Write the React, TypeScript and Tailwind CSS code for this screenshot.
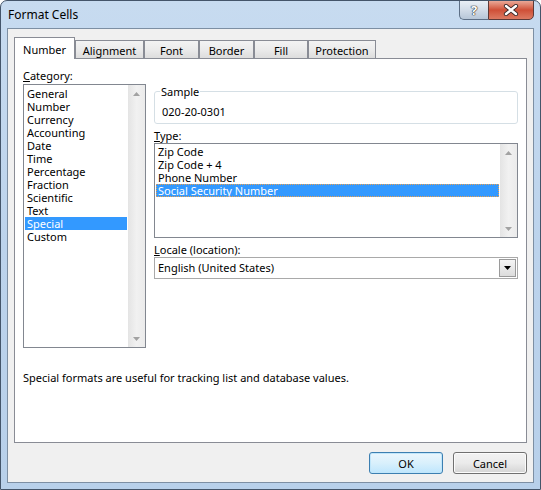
const categories = [
  "General",
  "Number",
  "Currency",
  "Accounting",
  "Date",
  "Time",
  "Percentage",
  "Fraction",
  "Scientific",
  "Text",
  "Special",
  "Custom",
];

const types = ["Zip Code", "Zip Code + 4", "Phone Number", "Social Security Number"];

const tabs = [
  { label: "Number", w: "w-[61px]" },
  { label: "Alignment", w: "w-[69px]" },
  { label: "Font", w: "w-[55px]" },
  { label: "Border", w: "w-[55px]" },
  { label: "Fill", w: "w-[54px]" },
  { label: "Protection", w: "w-[68px]" },
];

function ScrollBar() {
  return (
    <div className="w-[17px] flex flex-col justify-between bg-linear-to-r from-[#e4e4e4] via-[#f1f1f1] to-[#ebebeb]">
      <div className="h-[17px] flex items-center justify-center">
        <svg width="7" height="4" viewBox="0 0 7 4">
          <path d="M0 4 L3.5 0 L7 4 Z" fill="#a2a2a2" />
        </svg>
      </div>
      <div className="h-[17px] flex items-center justify-center">
        <svg width="7" height="4" viewBox="0 0 7 4">
          <path d="M0 0 L3.5 4 L7 0 Z" fill="#a2a2a2" />
        </svg>
      </div>
    </div>
  );
}

export default function App() {
  return (
    <div className="w-[541px] h-[490px] flex flex-col rounded-t-[7px] border border-[#44556a] bg-linear-to-b from-[#c7dbf0] via-[#bcd3ec] to-[#b8d0ea] text-[11px] text-black font-['Noto_Sans',sans-serif] overflow-hidden">
      {/* Title bar */}
      <div className="h-[27px] flex items-start pl-[7px] pr-[6px]">
        <div className="pt-[6px] leading-[16px] text-[12px] text-[#000]">Format Cells</div>
        <div className="ml-auto -mt-px flex">
          <div className="w-[29px] h-[20px] flex items-center justify-center rounded-bl-[5px] border border-r-0 border-[#5d6f86] bg-linear-to-b from-[#e9eff6] via-[#d2dce8] to-[#b7c6d8] text-white font-bold text-[13px] leading-none [text-shadow:0_0_1px_#222,0_0_1px_#222,0_0_1px_#222]">
            ?
          </div>
          <div className="w-[46px] h-[20px] flex items-center justify-center rounded-br-[5px] border border-[#5d3a38] bg-linear-to-b from-[#e9a897] via-[#cf4f37] to-[#dc7a62]">
            <svg width="16" height="12" viewBox="0 0 16 12">
              <path d="M3 2 L13 10 M13 2 L3 10" stroke="#3b2a2a" strokeWidth="4.2" strokeLinecap="round" />
              <path d="M3 2 L13 10 M13 2 L3 10" stroke="#ffffff" strokeWidth="2.4" strokeLinecap="round" />
            </svg>
          </div>
        </div>
      </div>

      {/* Client area */}
      <div className="mx-[6px] h-[455px] border border-[#7d8fa3] bg-[#f0f0f0] flex flex-col">
        {/* Tabs */}
        <div className="flex items-end pt-[8px] pl-[6px]">
          {tabs.map((t, i) =>
            i === 0 ? (
              <div
                key={t.label}
                className={`${t.w} relative z-10 -mb-px h-[22px] flex justify-center pt-[4px] leading-[15px] border border-b-0 border-[#898c95] bg-white`}
              >
                {t.label}
              </div>
            ) : (
              <div
                key={t.label}
                className={`${t.w} h-[18px] flex justify-center pt-[2px] leading-[15px] border border-b-0 border-[#898c95] bg-linear-to-b from-[#f3f3f3] via-[#ebebeb] to-[#dddddd]`}
              >
                {t.label}
              </div>
            )
          )}
        </div>

        {/* Panel */}
        <div className="mx-[6px] h-[385px] border border-[#898c95] bg-white pl-[8px] pt-[9px]">
          <div className="flex items-start">
            {/* Category */}
            <div className="w-[123px]">
              <div className="h-[15px] leading-[15px]">
                <span className="underline">C</span>ategory:
              </div>
              <div className="mt-[1px] h-[264px] border border-[#828790] flex">
                <div className="flex-1 pt-[2px] px-[1px]">
                  {categories.map((c) => (
                    <div
                      key={c}
                      className={`h-[13px] leading-[13px] pl-[2px] ${
                        c === "Special" ? "bg-[#3399ff] text-white" : ""
                      }`}
                    >
                      {c}
                    </div>
                  ))}
                </div>
                <ScrollBar />
              </div>
            </div>

            {/* Right column */}
            <div className="ml-[8px] w-[364px] mt-[16px]">
              <fieldset className="border border-[#d5dfe5] rounded-[3px] pl-[7px] pb-[4px]">
                <legend className="-ml-[2px] px-[1px] leading-[15px]">Sample</legend>
                <div className="mt-[5px] leading-[15px]">020-20-0301</div>
              </fieldset>

              <div className="mt-[4px] h-[15px] leading-[15px]">
                <span className="underline">T</span>ype:
              </div>
              <div className="h-[95px] border border-[#828790] flex">
                <div className="flex-1 pt-[1px] px-[1px]">
                  {types.map((t) => (
                    <div
                      key={t}
                      className={`h-[13px] leading-[13px] pl-[2px] ${
                        t === "Social Security Number"
                          ? "bg-[#3399ff] text-white outline outline-1 outline-dotted outline-[#e8a050] -outline-offset-1"
                          : ""
                      }`}
                    >
                      {t}
                    </div>
                  ))}
                </div>
                <ScrollBar />
              </div>

              <div className="mt-[4px] h-[15px] leading-[15px]">
                <span className="underline">L</span>ocale (location):
              </div>
              <div className="h-[22px] border border-[#a9a9a9] bg-white flex items-start">
                <div className="flex-1 pl-[3px] pt-[2px] leading-[16px]">English (United States)</div>
                <div className="mt-px mr-px w-[17px] h-[18px] border border-[#9a9a9a] bg-linear-to-b from-[#f4f4f4] to-[#dcdcdc] flex items-center justify-center">
                  <svg width="7" height="4" viewBox="0 0 7 4">
                    <path d="M0 0 L3.5 4 L7 0 Z" fill="#000" />
                  </svg>
                </div>
              </div>
            </div>
          </div>

          <div className="mt-[22px] h-[15px] leading-[15px]">
            Special formats are useful for tracking list and database values.
          </div>
        </div>

        {/* Buttons */}
        <div className="mt-[9px] flex justify-end gap-[10px] pr-[6px]">
          <button className="w-[74px] h-[22px] rounded-[3px] border border-[#3c7fb1] bg-linear-to-b from-[#eaf6fd] via-[#d9f0fc] to-[#bee6fd] shadow-[inset_0_0_0_1px_#c0e6fb] leading-[15px]">
            OK
          </button>
          <button className="w-[74px] h-[22px] rounded-[3px] border border-[#707070] bg-linear-to-b from-[#f2f2f2] via-[#ebebeb] to-[#d4d4d4] shadow-[inset_0_0_0_1px_#fbfbfb] leading-[15px]">
            Cancel
          </button>
        </div>
      </div>
    </div>
  );
}
